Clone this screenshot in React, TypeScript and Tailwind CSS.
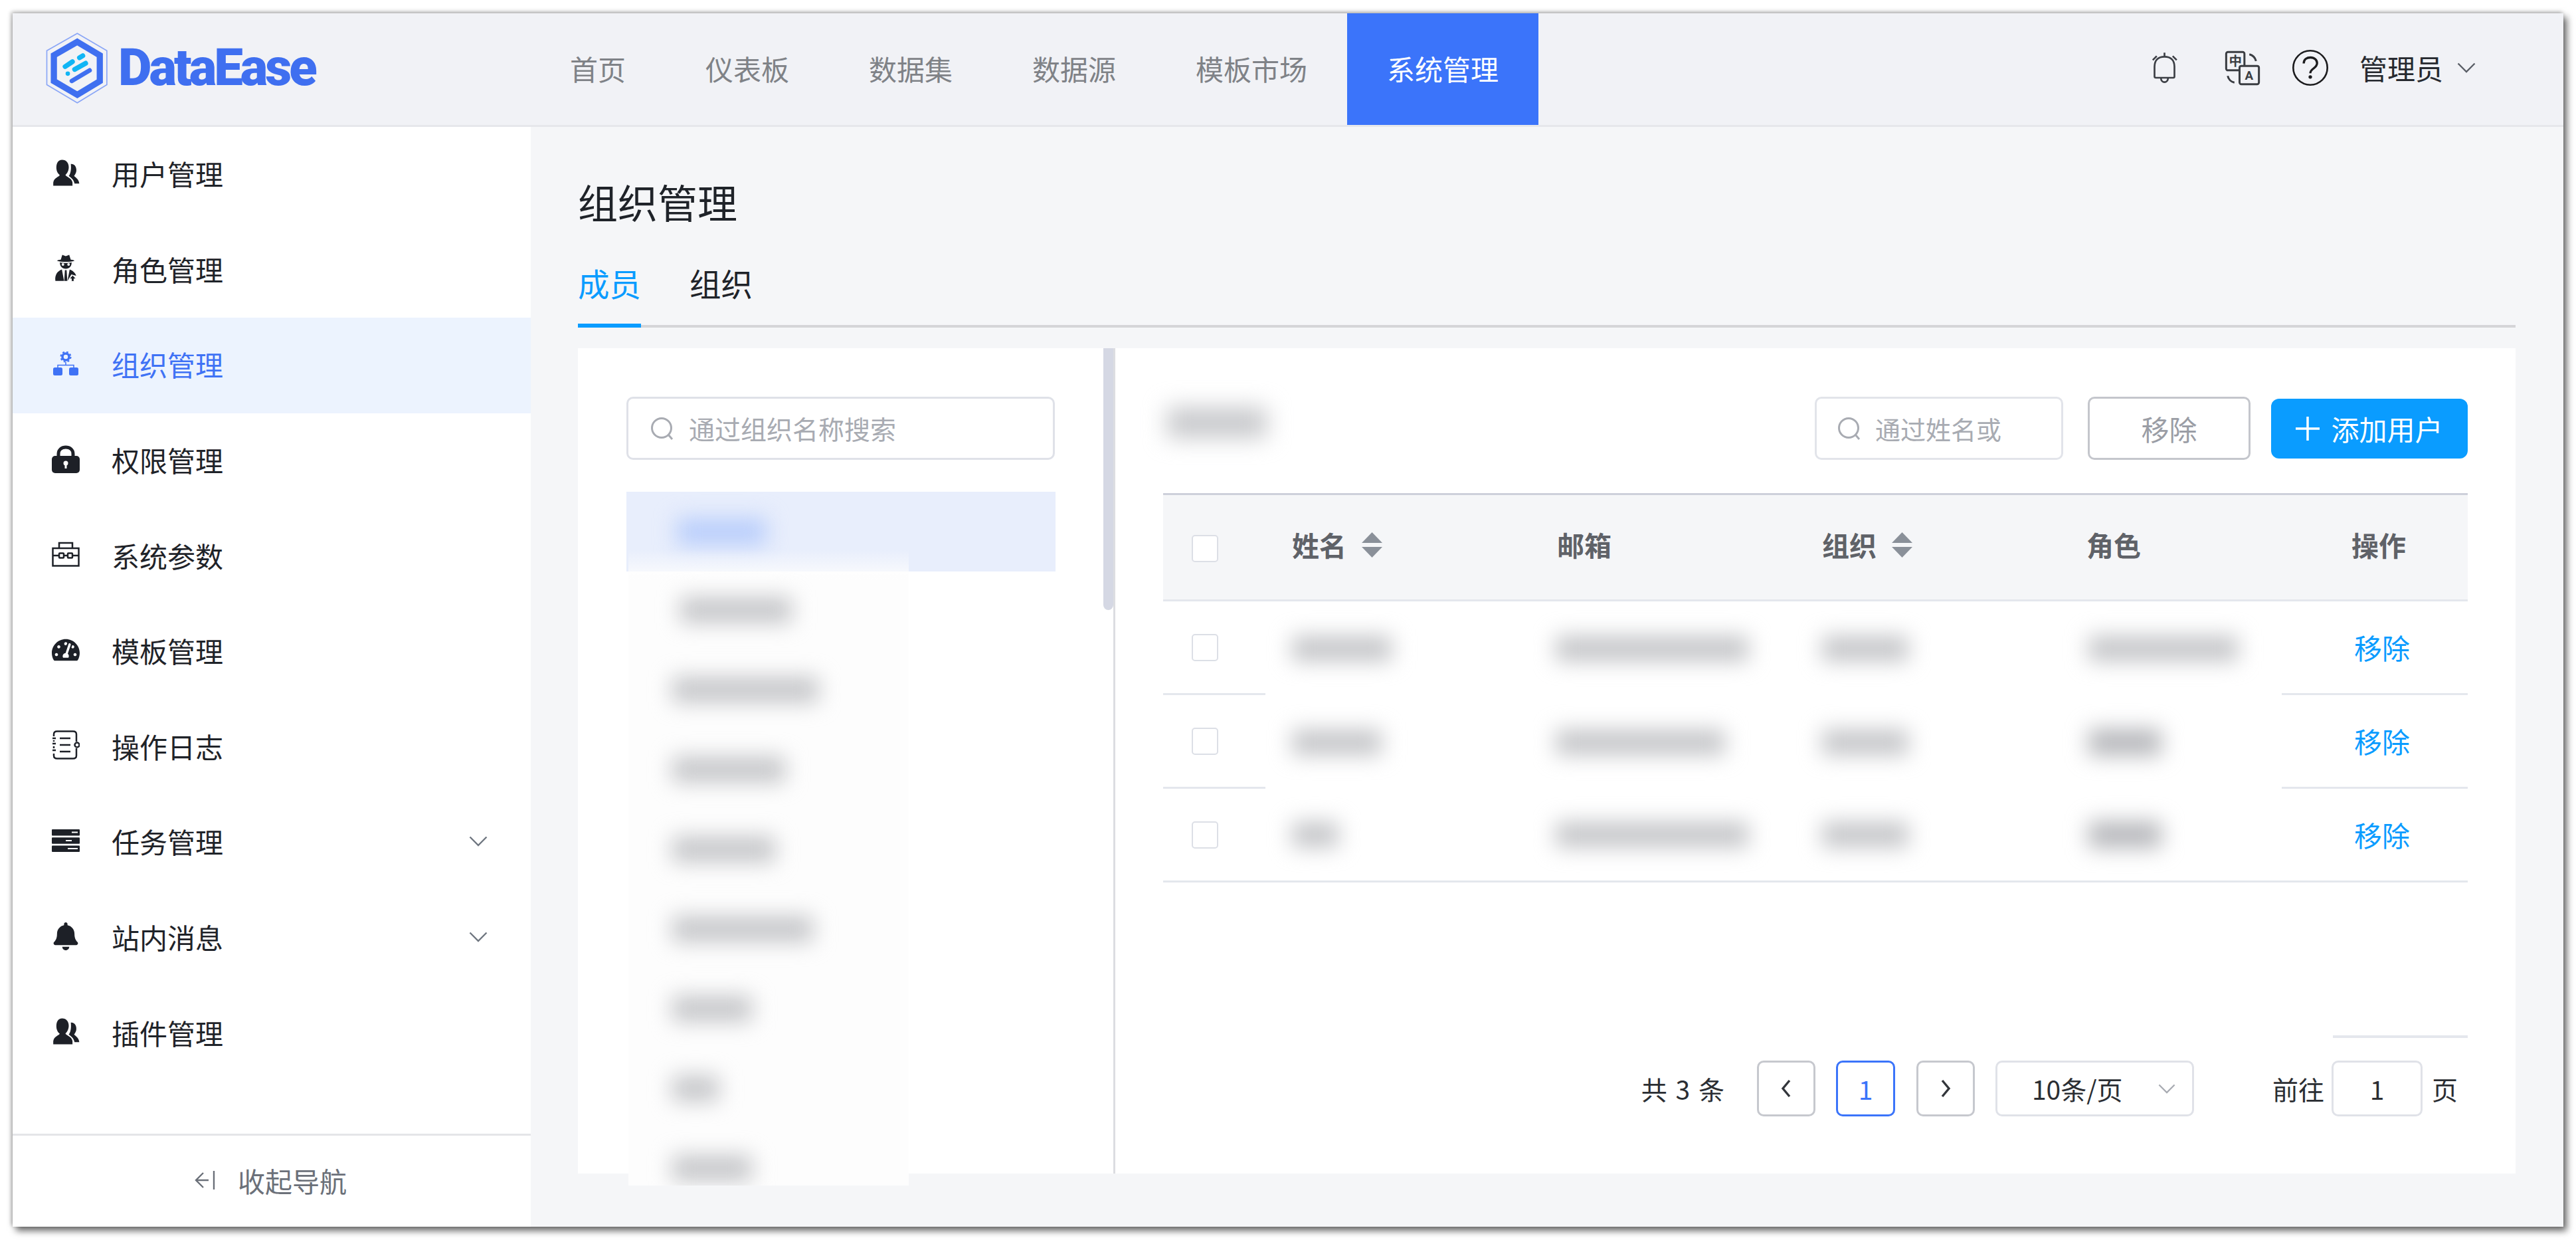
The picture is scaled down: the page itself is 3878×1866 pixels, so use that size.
import { FaTachometerAlt, FaBell } from "react-icons/fa";
import clsx from "clsx";

const topNav = ["首页", "仪表板", "数据集", "数据源", "模板市场", "系统管理"];

const UsersIcon = () => (
  <svg viewBox="50 35 135 135" className="w-[44px] h-[44px]" fill="#1d2027">
    <path d="M100 40C80 40 72 58 72 78C72 95 80 108 88 113C88 122 60 125 57 150V165H150V150C148 128 118 122 116 113C124 106 132 92 132 76C132 55 120 40 100 40Z" />
    <path d="M142 60C160 58 172 75 168 98C166 108 160 114 158 118C162 125 180 130 183 155H160C155 132 140 125 132 118C140 108 145 90 142 60Z" />
  </svg>
);

const SpyIcon = () => (
  <svg viewBox="65 470 110 135" className="w-[36px] h-[44px]" fill="#1d2027">
    <path d="M97 500L104 478L120 484L136 478L143 500C152 501 158 502 160 505C140 512 100 512 80 505C82 502 88 501 97 500Z" />
    <path d="M93 512C104 516 136 516 147 512C148 530 136 542 120 542C104 542 92 530 93 512Z" />
    <circle cx="107" cy="522" r="6" fill="#fff" />
    <circle cx="133" cy="522" r="6" fill="#fff" />
    <path d="M72 598C68 570 82 552 102 545L112 598Z" />
    <path d="M138 545C152 550 164 560 168 574L146 568L128 598Z" />
    <path d="M116 548H124L127 598H113Z" />
    <path d="M152 572L168 588H158V600H146V588H136Z" stroke="#fff" strokeWidth="3" />
  </svg>
);

const OrgIcon = () => (
  <svg viewBox="0 0 38 36" className="w-[38px] h-[36px]" fill="#3f72f5">
    <circle cx="19" cy="8" r="5" fill="none" stroke="#3f72f5" strokeWidth="3.5" />
    <circle cx="19" cy="8" r="7.5" fill="none" stroke="#3f72f5" strokeWidth="2" strokeDasharray="3 3" />
    <path d="M19 16V20M7 24V20.5H31V24" fill="none" stroke="#3f72f5" strokeWidth="1.5" />
    <rect x="0" y="24" width="14" height="12" rx="2.5" />
    <rect x="24" y="24" width="14" height="12" rx="2.5" />
  </svg>
);

const LockIcon = () => (
  <svg viewBox="0 0 42 42" className="w-[42px] h-[42px]" fill="#1d2027">
    <path d="M10 18V13C10 6.5 15 3 21 3S32 6.5 32 13V18" fill="none" stroke="#1d2027" strokeWidth="5" />
    <rect x="0" y="16" width="42" height="26" rx="5" />
    <circle cx="21" cy="27" r="3.5" fill="#fff" />
    <rect x="19.5" y="27" width="3" height="8" fill="#fff" />
  </svg>
);

const ToolboxIcon = () => (
  <svg viewBox="0 0 42 38" className="w-[42px] h-[38px]" fill="none" stroke="#1d2027" strokeWidth="2.5">
    <rect x="1.5" y="10" width="39" height="26.5" />
    <path d="M11 10V2H31V10" />
    <path d="M1.5 21H11M18 21H24M31 21H40.5" />
    <rect x="11" y="17.5" width="7" height="7" rx="1" />
    <rect x="24" y="17.5" width="7" height="7" rx="1" />
  </svg>
);

const NotebookIcon = () => (
  <svg viewBox="0 0 42 44" className="w-[42px] h-[44px]" fill="none" stroke="#1d2027" strokeWidth="2.5">
    <path d="M3 9V6C3 3 5 1.5 8 1.5H32C35 1.5 37 3 37 6V17M37 27V38C37 41 35 42.5 32 42.5H8C5 42.5 3 41 3 38V35M3 27V24M3 17V15" />
    <circle cx="38" cy="22" r="3.5" />
    <path d="M12 12H28M12 22H28M12 32H28" />
    <path d="M1 12H6M1 20H6M1 30H6" />
  </svg>
);

const ServerIcon = () => (
  <svg viewBox="0 0 42 34" className="w-[42px] h-[34px]" fill="#1d2027">
    <rect width="42" height="9.5" rx="1" />
    <rect y="12.2" width="42" height="9.5" rx="1" />
    <rect y="24.4" width="42" height="9.5" rx="1" />
    <path d="M30 4.5H39M21 17H30M24 29H39" stroke="#fff" strokeWidth="2.2" />
  </svg>
);

const Chevron = ({ className, stroke }: { className: string; stroke: string }) => (
  <svg viewBox="0 0 28 16" className={className} fill="none" stroke={stroke} strokeWidth="2.4">
    <path d="M1.5 1.5L14 14L26.5 1.5" />
  </svg>
);

const SearchIcon = ({ className }: { className: string }) => (
  <svg viewBox="0 0 36 36" className={className} fill="none" stroke="#a8abb2" strokeWidth="3">
    <circle cx="17" cy="17" r="14.5" />
    <path d="M27 27L33 34" />
  </svg>
);

const SortCaret = () => (
  <svg viewBox="0 0 31 38" className="w-[31px] h-[38px]" fill="#8a9099">
    <path d="M15.5 0L31 16H0Z" />
    <path d="M15.5 38L0 22H31Z" />
  </svg>
);

const PageArrow = ({ d }: { d: string }) => (
  <svg viewBox="0 0 20 30" className="w-[20px] h-[30px]" fill="none" stroke="#33363b" strokeWidth="3.4">
    <path d={d} />
  </svg>
);

const menu = [
  { label: "用户管理", icon: <UsersIcon /> },
  { label: "角色管理", icon: <SpyIcon /> },
  { label: "组织管理", icon: <OrgIcon />, active: true },
  { label: "权限管理", icon: <LockIcon /> },
  { label: "系统参数", icon: <ToolboxIcon /> },
  { label: "模板管理", icon: <FaTachometerAlt className="w-[42px] h-[42px] text-[#1d2027]" /> },
  { label: "操作日志", icon: <NotebookIcon /> },
  { label: "任务管理", icon: <ServerIcon />, arrow: true },
  { label: "站内消息", icon: <FaBell className="w-[42px] h-[42px] text-[#1d2027]" />, arrow: true },
  { label: "插件管理", icon: <UsersIcon /> },
];

const tree = [
  { ml: 78, w: 168 },
  { ml: 66, w: 220 },
  { ml: 66, w: 170 },
  { ml: 66, w: 155 },
  { ml: 66, w: 212 },
  { ml: 66, w: 120 },
  { ml: 66, w: 70 },
  { ml: 66, w: 120 },
];

const rows = [
  { name: 150, email: 290, org: 130, role: 225, dark: false },
  { name: 135, email: 255, org: 130, role: 110, dark: true },
  { name: 70, email: 290, org: 130, role: 110, dark: true },
];

const rowLine = "border-b-[3px] border-[#e4e7ed]";
const tableCols = "grid grid-cols-[154px_399px_399px_399px_399px_1fr]";

const Smudge = ({ w, dark }: { w: number; dark?: boolean }) => (
  <div
    className={dark ? "h-[40px] bg-[#b6b7bb] blur-[16px]" : "h-[38px] bg-[#c4c5c8] blur-[16px]"}
    style={{ width: w }}
  />
);

const Checkbox = () => (
  <div className="w-[40px] h-[41px] rounded-[5px] border-2 border-[#dcdfe6] bg-white" />
);

export default function App() {
  return (
    <div className="w-[3878px] h-[1866px] bg-white pt-[20px] pl-[19px] font-['Noto_Sans_CJK_SC','Noto_Sans',sans-serif]">
      <div className="w-[3840px] h-[1826px] flex flex-col bg-[#f5f6f8] shadow-[5px_6px_10px_rgba(0,0,0,0.6),-2px_-2px_6px_rgba(0,0,0,0.3)]">
        <header className="h-[171px] shrink-0 flex bg-[#f1f2f6] border-b-[3px] border-[#e6e7eb]">
          <div className="w-[779px] shrink-0 flex items-center pl-[49px] pb-[4px]">
            <svg viewBox="25 25 285 325" className="w-[95px] h-[108px]" fill="none">
              <path d="M170 32L304 110V264L170 346L32 264V110Z" stroke="#8aa6f6" strokeWidth="5" />
              <path d="M170 70L272 131V248L170 310L64 248V131Z" stroke="#3f6ff0" strokeWidth="28" />
              <g stroke="#11b5f5" strokeWidth="22" strokeLinecap="round">
                <path d="M115 182L148 160" />
                <path d="M180 142L195 133" />
                <path d="M158 195L208 167" />
              </g>
              <circle cx="127" cy="214" r="10" fill="#11b5f5" />
              <path d="M145 247L226 199" stroke="#3f6ff0" strokeWidth="20" strokeLinecap="round" />
            </svg>
            <span className="ml-[15px] font-['Roboto',sans-serif] font-black text-[78px] leading-none tracking-[-4px] text-[#3f6ff0]">
              DataEase
            </span>
          </div>
          <nav className="flex h-[168px]">
            {topNav.map((item, i) => (
              <div
                key={item}
                className={clsx(
                  "px-[60px] pb-[4px] flex items-center text-[42px]",
                  i === topNav.length - 1 ? "text-white bg-[#3b74fa]" : "text-[#7f8287]",
                )}
              >
                {item}
              </div>
            ))}
          </nav>
          <div className="ml-auto flex items-center pr-[132px] pb-[4px]">
            <svg viewBox="30 30 125 150" className="w-[42px] h-[50px]" fill="none" stroke="#3c3f45" strokeWidth="8">
              <path d="M52 150H131C135 150 136 148 136 145V100C136 70 118 55 91 55C64 55 46 70 46 100V145C46 148 48 150 52 150Z" />
              <path d="M75 152C76 176 106 176 107 152" />
              <path d="M91 37V52M38 70L56 52M128 52L146 70" />
            </svg>
            <svg viewBox="355 15 170 170" className="ml-[67px] w-[57px] h-[57px]" fill="none" stroke="#3a3d42" strokeWidth="9">
              <rect x="368" y="28" width="82" height="82" rx="8" />
              <text x="409" y="90" textAnchor="middle" fontSize="58" fontWeight="700" fill="#3a3d42" stroke="none">
                中
              </text>
              <path d="M472 38C488 42 498 52 502 68M375 135C378 150 390 162 405 165" />
              <rect x="428" y="90" width="87" height="82" rx="8" fill="#f1f2f6" />
              <text x="471" y="152" textAnchor="middle" fontSize="56" fontWeight="700" fill="#3a3d42" stroke="none" fontFamily="Roboto, sans-serif">
                A
              </text>
            </svg>
            <svg viewBox="660 20 170 170" className="ml-[46px] w-[56px] h-[56px]" fill="none" stroke="#1c1c1e" strokeWidth="8">
              <circle cx="745" cy="105" r="78" />
              <path d="M715 85C715 66 730 58 746 58C764 58 776 70 776 84C776 108 745 108 745 130" strokeWidth="10" />
              <circle cx="745" cy="147" r="8" fill="#1c1c1e" stroke="none" />
            </svg>
            <span className="ml-[46px] text-[42px] leading-none text-[#26292f]">管理员</span>
            <Chevron className="ml-[21px] w-[28px] h-[16px]" stroke="#5a5e66" />
          </div>
        </header>

        <div className="flex-1 flex min-h-0">
          <aside className="w-[780px] shrink-0 flex flex-col bg-white">
            <div className="flex-1">
              {menu.map((m) => (
                <div
                  key={m.label}
                  className={clsx(
                    "h-[143.6px] flex items-center pl-[59px]",
                    m.active ? "bg-[#ecf3fe] text-[#3f72f5]" : "text-[#1f2329]",
                  )}
                >
                  <div className="w-[42px] h-[48px] flex items-center justify-center mb-[6px]">{m.icon}</div>
                  <span className="ml-[48px] mb-[3px] text-[42px] leading-none">{m.label}</span>
                  {m.arrow && <Chevron className="ml-auto mr-[65px] w-[28px] h-[16px] mb-[4px]" stroke="#6f7680" />}
                </div>
              ))}
            </div>
            <div className="h-[140px] shrink-0 border-t-[3px] border-[#e4e5e8] flex items-center justify-center pr-[4px] pb-[3px] text-[#6b7079]">
              <svg viewBox="0 0 32 30" className="w-[32px] h-[30px] mr-[34px]" fill="none" stroke="#6b7079" strokeWidth="2.4">
                <path d="M14 4L3 15L14 26M3 15H22M30 1V29" />
              </svg>
              <span className="text-[41px] leading-none">收起导航</span>
            </div>
          </aside>

          <main className="flex-1 min-w-0 pl-[71px] pr-[72px]">
            <h1 className="mt-[82px] text-[60px] leading-[60px] font-normal text-[#1f2329]">组织管理</h1>
            <div className="mt-[69px] flex gap-[73px] border-b-[4px] border-[#d5d5d8]">
              <div className="-mb-[4px] pb-[37px] border-b-[6px] border-[#0a9cff] text-[47.5px] leading-[48px] text-[#0a9cff]">成员</div>
              <div className="text-[47.5px] leading-[48px] text-[#1f2329]">组织</div>
            </div>

            <section className="mt-[31px] h-[1242px] flex bg-white">
              <div className="relative w-[809px] shrink-0 border-r-[3px] border-[#dcdde1] pt-[73px] pl-[73px]">
                <div className="w-[645px] h-[95px] flex items-center rounded-[10px] border-[3px] border-[#dfe1e8] pl-[33px]">
                  <SearchIcon className="w-[36px] h-[36px]" />
                  <span className="ml-[22px] text-[39px] leading-none text-[#a8abb2]">通过组织名称搜索</span>
                </div>
                <div className="mt-[48px] w-[646px] h-[120px] flex items-center bg-[#e8eefc] pl-[76px]">
                  <div className="w-[135px] h-[40px] bg-[#b8cdfb] blur-[16px]" />
                </div>

                <div className="absolute left-[76px] top-[303px] w-[422px] h-[957px] overflow-hidden pt-[31px] bg-linear-to-b from-transparent to-[#fdfdfd] to-[5%]">
                  {tree.map((t, i) => (
                    <div key={i} className="h-[120px] flex items-center">
                      <div style={{ marginLeft: t.ml }}>
                        <Smudge w={t.w} />
                      </div>
                    </div>
                  ))}
                </div>

                <div className="absolute right-0 top-0 w-[15px] h-[394px] rounded-b-[8px] bg-[#d5d8e4]" />
              </div>

              <div className="flex-1 min-w-0 pt-[73px] pl-[72px] pr-[72px]">
                <div className="flex items-center h-[95px]">
                  <div className="ml-[6px] mb-[18px] w-[150px] h-[46px] bg-[#c8c9cc] blur-[17px]" />
                  <div className="ml-auto w-[374px] h-[95px] flex items-center rounded-[10px] border-[3px] border-[#e2e4ea] pl-[31px]">
                    <SearchIcon className="w-[36px] h-[36px]" />
                    <span className="ml-[21px] text-[38px] leading-none text-[#a8abb2]">通过姓名或</span>
                  </div>
                  <div className="ml-[37px] w-[245px] h-[95px] flex items-center justify-center rounded-[10px] border-[3px] border-[#c4c6cc] text-[42px] text-[#9a9da5]">
                    移除
                  </div>
                  <div className="ml-[31px] w-[296px] h-[90px] flex items-center justify-center rounded-[12px] bg-[#0a9cff] text-[42px] text-white">
                    <svg viewBox="0 0 36 36" className="w-[36px] h-[36px] mr-[17px]" fill="none" stroke="#fff" strokeWidth="3.5">
                      <path d="M18 0V36M0 18H36" />
                    </svg>
                    添加用户
                  </div>
                </div>

                <div className={clsx(tableCols, "mt-[50px] h-[163px] items-center bg-[#f5f6f8] border-t-[3px] border-b-[3px] border-t-[#cdd0da] border-b-[#e4e7ed] text-[41px] font-bold text-[#5f6268]")}>
                  <div className="pl-[43px] pt-[4px]">
                    <Checkbox />
                  </div>
                  <div className="pl-[40px] pb-[7px] flex items-center gap-[23px]">
                    姓名
                    <SortCaret />
                  </div>
                  <div className="pl-[40px] pb-[7px]">邮箱</div>
                  <div className="pl-[40px] pb-[7px] flex items-center gap-[23px]">
                    组织
                    <SortCaret />
                  </div>
                  <div className="pl-[39px] pb-[7px]">角色</div>
                  <div className="pl-[39px] pb-[7px]">操作</div>
                </div>

                {rows.map((r, i) => (
                  <div key={i} className={clsx(tableCols, "h-[141px]")}>
                    <div className={clsx("pl-[43px] flex items-center", rowLine)}>
                      <Checkbox />
                    </div>
                    <div className={clsx("pl-[40px] flex items-center", i === 2 && rowLine)}>
                      <Smudge w={r.name} />
                    </div>
                    <div className={clsx("pl-[38px] flex items-center", i === 2 && rowLine)}>
                      <Smudge w={r.email} />
                    </div>
                    <div className={clsx("pl-[40px] flex items-center", i === 2 && rowLine)}>
                      <Smudge w={r.org} />
                    </div>
                    <div className="flex">
                      <div className={clsx("w-[333px] pl-[42px] flex items-center", i === 2 && rowLine)}>
                        <Smudge w={r.role} dark={r.dark} />
                      </div>
                      <div className={clsx("flex-1", rowLine)} />
                    </div>
                    <div className={clsx("flex items-center pl-[43px] pb-[2px] text-[42px] text-[#0a9cff]", rowLine)}>移除</div>
                  </div>
                ))}

                <div className="ml-auto mt-[230px] w-[203px] h-[4px] bg-[#e4e7ed]" />

                <div className="mt-[34px] h-[84px] flex items-center justify-end pr-[15px] text-[39px] text-[#2b2e33]">
                  <span className="mr-[47px] tracking-[2px]">共 3 条</span>
                  <div className="w-[88px] h-[84px] mr-[31px] flex items-center justify-center rounded-[10px] border-[3px] border-[#c6c8ce]">
                    <PageArrow d="M15 3L5 15L15 27" />
                  </div>
                  <div className="w-[89px] h-[84px] mr-[32px] flex items-center justify-center rounded-[10px] border-[3px] border-[#3b74fa] text-[#3b74fa]">
                    1
                  </div>
                  <div className="w-[88px] h-[84px] mr-[31px] flex items-center justify-center rounded-[10px] border-[3px] border-[#c6c8ce]">
                    <PageArrow d="M5 3L15 15L5 27" />
                  </div>
                  <div className="w-[299px] h-[84px] mr-[118px] flex items-center pl-[52px] pr-[25px] rounded-[10px] border-[3px] border-[#e0e2e8]">
                    10条/页
                    <Chevron className="ml-auto w-[26px] h-[15px]" stroke="#a8abb2" />
                  </div>
                  <span className="mr-[11px]">前往</span>
                  <div className="w-[137px] h-[84px] mr-[14px] flex items-center justify-center rounded-[10px] border-[3px] border-[#e0e2e8]">
                    1
                  </div>
                  <span>页</span>
                </div>
              </div>
            </section>
          </main>
        </div>
      </div>
    </div>
  );
}
